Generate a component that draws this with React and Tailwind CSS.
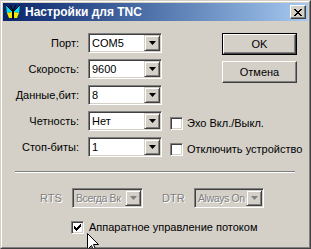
const FONT = { fontFamily: '"Liberation Sans", Arial, sans-serif' };

const Arrow = ({ disabled }) => (
  <svg width="7" height="4" viewBox="0 0 7 4">
    <polygon points="0,0 7,0 3.5,4" fill={disabled ? "#808080" : "#000000"} />
  </svg>
);

const Combo = ({ value, width, disabled }) => (
  <div
    className={`flex h-[20px] border border-t-[#808080] border-l-[#808080] border-r-white border-b-white shadow-[inset_1px_1px_#404040,inset_-1px_-1px_#d4d0c8] p-[1px] ${width} ${
      disabled ? "bg-[#d4d0c8]" : "bg-white"
    }`}
  >
    <div className="flex-1 overflow-hidden whitespace-nowrap flex items-center pl-[2px] leading-none">
      {disabled ? (
        <span className="text-[10.5px] text-[#808080] tracking-[-0.4px] [text-shadow:1px_1px_0_#ffffff]">{value}</span>
      ) : (
        <span className="text-[11px] text-black">{value}</span>
      )}
    </div>
    <div className="w-[16px] h-full shrink-0 flex items-center justify-center bg-[#d4d0c8] border border-t-[#d4d0c8] border-l-[#d4d0c8] border-r-[#404040] border-b-[#404040] shadow-[inset_1px_1px_#ffffff,inset_-1px_-1px_#808080]">
      <Arrow disabled={disabled} />
    </div>
  </div>
);

const Checkbox = ({ checked }) => (
  <div className="w-[13px] h-[13px] shrink-0 bg-white border border-t-[#808080] border-l-[#808080] border-r-white border-b-white shadow-[inset_1px_1px_#404040,inset_-1px_-1px_#d4d0c8] flex items-center justify-center">
    {checked && (
      <svg width="7" height="7" viewBox="0 0 7 7">
        <path d="M0 2h1v1h1v1h1v-1h1v-1h1v-1h1v-1h1v3h-1v1h-1v1h-1v1h-1v1h-1v-1h-1v-1h-1z" fill="#000" />
      </svg>
    )}
  </div>
);

const Button = ({ children, isDefault }) => (
  <div className={`w-[75px] h-[22px] ${isDefault ? "border border-black" : ""}`}>
    <div className="w-full h-full flex items-center justify-center text-[11px] text-black bg-[#d4d0c8] border border-t-white border-l-white border-r-[#404040] border-b-[#404040] shadow-[inset_-1px_-1px_#808080]">
      {children}
    </div>
  </div>
);

const Row = ({ label, value, children }) => (
  <div className="flex items-center h-[20px]">
    <span className="w-[76px] text-right text-[11px] text-black">{label}</span>
    <div className="ml-[9px]">
      <Combo value={value} width="w-[74px]" />
    </div>
    {children}
  </div>
);

const App = () => {
  return (
    <div
      className="relative w-[311px] h-[249px] bg-[#d4d0c8] border border-t-[#d4d0c8] border-l-[#d4d0c8] border-r-[#404040] border-b-[#404040] overflow-hidden select-none"
      style={FONT}
    >
      <div className="w-full h-full border border-t-white border-l-white border-r-[#808080] border-b-[#808080] p-[1px] flex flex-col">
        {/* Title bar */}
        <div className="h-[18px] flex items-center bg-gradient-to-r from-[#0a246a] to-[#a6caf0] pl-[2px] pr-[2px]">
          <svg width="16" height="16" viewBox="0 0 16 16" className="shrink-0">
            <polygon points="1,1 7,7 7,8 2,9" fill="#00e0f0" />
            <polygon points="15,1 9,7 9,8 14,9" fill="#00e0f0" />
            <polygon points="2,9 7,8 7,14 4,14" fill="#f8e800" />
            <polygon points="14,9 9,8 9,14 12,14" fill="#f8e800" />
            <rect x="7" y="5" width="2" height="10" fill="#000" />
            <path d="M7 5 L5 1 M9 5 L11 1" stroke="#000" strokeWidth="1" />
            <path d="M1 1 L7 7 M15 1 L9 7" stroke="#000" strokeWidth="1" />
          </svg>
          <span className="ml-[4px] text-white font-bold text-[12px] leading-none">Настройки для TNC</span>
          <div className="ml-auto w-[16px] h-[14px] bg-[#d4d0c8] border border-t-white border-l-white border-r-[#404040] border-b-[#404040] shadow-[inset_-1px_-1px_#808080] flex items-center justify-center">
            <svg width="8" height="7" viewBox="0 0 8 7">
              <path d="M0 0h2v1h1v1h2v-1h1v-1h2v1h-1v1h-1v1h-1v1h1v1h1v1h1v1h-2v-1h-1v-1h-2v1h-1v1h-2v-1h1v-1h1v-1h1v-1h-1v-1h-1v-1h-1z" fill="#000" />
            </svg>
          </div>
        </div>

        {/* Body */}
        <div className="flex-1 pt-[12px]">
          <div className="flex items-start">
            <div className="flex flex-col gap-[6px]">
              <Row label="Порт:" value="COM5" />
              <Row label="Скорость:" value="9600" />
            </div>
            <div className="ml-[60px] flex flex-col gap-[6px]">
              <Button isDefault>OK</Button>
              <Button>Отмена</Button>
            </div>
          </div>
          <div className="mt-[2px] flex flex-col gap-[6px]">
            <Row label="Данные,бит:" value="8" />
            <Row label="Четность:" value="Нет">
              <div className="ml-[8px] flex items-center gap-[4px] mt-[4px]">
                <Checkbox />
                <span className="text-[11px] text-black">Эхо Вкл./Выкл.</span>
              </div>
            </Row>
            <Row label="Стоп-биты:" value="1">
              <div className="ml-[8px] flex items-center gap-[4px] mt-[4px]">
                <Checkbox />
                <span className="text-[11px] text-black whitespace-nowrap">Отключить устройство</span>
              </div>
            </Row>
          </div>

          {/* Separator */}
          <div className="ml-[12px] mt-[14px] w-[280px] border-t border-t-[#808080] border-b border-b-white" />

          {/* RTS / DTR */}
          <div className="mt-[15px] pl-[37px] flex items-center">
            <span className="w-[32px] text-[11px] text-[#808080] [text-shadow:1px_1px_0_#ffffff]">RTS</span>
            <Combo value="Всегда Вк" width="w-[71px]" disabled />
            <span className="ml-[19px] w-[32px] text-[11px] text-[#808080] [text-shadow:1px_1px_0_#ffffff]">DTR</span>
            <Combo value="Always On" width="w-[70px]" disabled />
          </div>

          {/* Flow control */}
          <div className="mt-[11px] pl-[68px] flex items-center gap-[5px]">
            <Checkbox checked />
            <span className="text-[11px] text-black">Аппаратное управление потоком</span>
          </div>
        </div>
      </div>

      {/* Mouse cursor */}
      <svg width="12" height="19" viewBox="0 0 12 19" className="absolute left-[86px] top-[232px]">
        <path d="M0.5 0.5 L0.5 16.5 L4.5 12.5 L7 18.5 L9 17.5 L6.5 11.5 L11.5 11.5 Z" fill="#fff" stroke="#000" strokeWidth="1" />
      </svg>
    </div>
  );
};

export default App;
